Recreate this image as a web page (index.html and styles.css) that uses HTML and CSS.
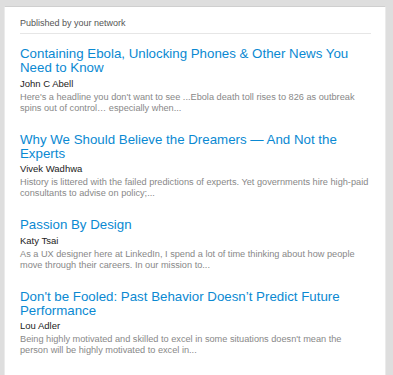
FILE: index.html
```html
<!DOCTYPE html>
<html>

<head>
    <title>Published by your network</title>
    <link rel="stylesheet" href="styles.css">
</head>

<body>
    <div class="card">
        <h3 class="card-head">Published by your network</h3>

        <ul class="posts">
            <li class="post">
                <a class="post-title" href="#">Containing Ebola, Unlocking Phones &amp; Other News You Need to Know</a>
                <div class="post-author">John C Abell</div>
                <p class="post-text">Here's a headline you don't want to see ...Ebola death toll rises to 826 as outbreak spins out of control… especially when...</p>
            </li>
            <li class="post">
                <a class="post-title" href="#">Why We Should Believe the Dreamers — And Not the Experts</a>
                <div class="post-author">Vivek Wadhwa</div>
                <p class="post-text">History is littered with the failed predictions of experts. Yet governments hire high-paid consultants to advise on policy;...</p>
            </li>
            <li class="post">
                <a class="post-title" href="#">Passion By Design</a>
                <div class="post-author">Katy Tsai</div>
                <p class="post-text">As a UX designer here at LinkedIn, I spend a lot of time thinking about how people move through their careers. In our mission to...</p>
            </li>
            <li class="post">
                <a class="post-title" href="#">Don't be Fooled: Past Behavior Doesn’t Predict Future Performance</a>
                <div class="post-author">Lou Adler</div>
                <p class="post-text">Being highly motivated and skilled to excel in some situations doesn't mean the person will be highly motivated to excel in...</p>
            </li>
        </ul>
    </div>
</body>

</html>
```

FILE: styles.css
```css
body {
    margin: 0;
    background-color: #dedede;
    font-family: "Liberation Sans", Arial, sans-serif;
}

.card {
    margin: 6px 7px 0 4px;
    min-height: 369px;
    box-sizing: border-box;
    padding: 0 14px 0 15px;
    background-color: #fff;
    border-top: 1px solid #cfcfcf;
    border-left: 1px solid #ebebeb;
    border-right: 1px solid #ebebeb;
}

.card-head {
    margin: 0;
    padding: 10px 0 4px 0;
    font-size: 9px;
    line-height: 12px;
    font-weight: normal;
    color: #555;
    border-bottom: 1px solid #e6e6e6;
}

.posts {
    list-style: none;
    margin: 13px 0 0 0;
    padding: 0;
}

.post {
    margin-bottom: 19px;
}

.post-title {
    display: block;
    font-size: 13.3px;
    line-height: 14px;
    color: #0a89d2;
    text-decoration: none;
}

.post-author {
    margin-top: 1.5px;
    font-size: 9.5px;
    line-height: 14px;
    color: #222;
}

.post-text {
    margin: 1px 0 0 0;
    font-size: 9.2px;
    line-height: 11px;
    color: #888;
}
```
